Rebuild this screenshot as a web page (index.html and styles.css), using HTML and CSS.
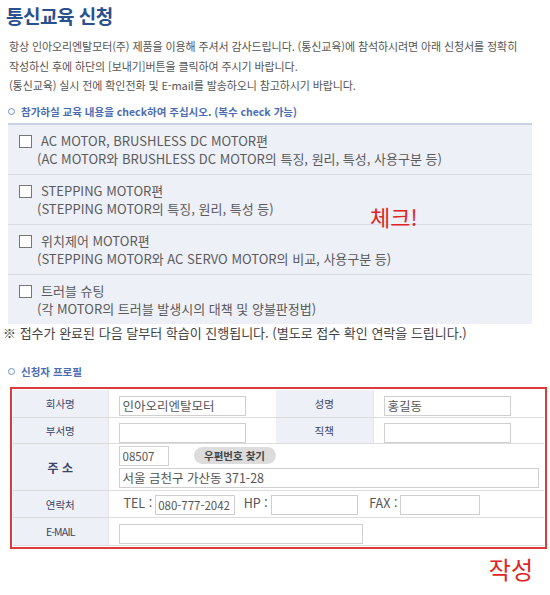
FILE: index.html
```html
<!doctype html>
<html lang="ko">
<head>
  <meta charset="UTF-8">
  <title>통신교육 신청</title>
  <link rel="stylesheet" href="styles.css">
</head>
<body>
<div class="page">
  <h1 class="title">통신교육 신청</h1>
  <p class="intro">
    항상 인아오리엔탈모터(주) 제품을 이용해 주셔서 감사드립니다. (통신교육)에 참석하시려면 아래 신청서를 정확히<br>
    작성하신 후에 하단의 [보내기]버튼을 클릭하여 주시기 바랍니다.<br>
    (통신교육) 실시 전에 확인전화 및 E-mail를 발송하오니 참고하시기 바랍니다.
  </p>

  <h2 class="sect">참가하실 교육 내용을 check하여 주십시오. (복수 check 가능)</h2>
  <div class="courses">
    <label class="course">
      <input type="checkbox" class="box">
      <span class="course-text">AC MOTOR, BRUSHLESS DC MOTOR편<br>(AC MOTOR와 BRUSHLESS DC MOTOR의 특징, 원리, 특성, 사용구분 등)</span>
    </label>
    <label class="course">
      <input type="checkbox" class="box">
      <span class="course-text">STEPPING MOTOR편<br>(STEPPING MOTOR의 특징, 원리, 특성 등)</span>
    </label>
    <label class="course">
      <input type="checkbox" class="box">
      <span class="course-text">위치제어 MOTOR편<br>(STEPPING MOTOR와 AC SERVO MOTOR의 비교, 사용구분 등)</span>
    </label>
    <label class="course">
      <input type="checkbox" class="box">
      <span class="course-text">트러블 슈팅<br>(각 MOTOR의 트러블 발생시의 대책 및 양불판정법)</span>
    </label>
    <span class="mark mark-check">체크!</span>
  </div>
  <p class="notice">※ 접수가 완료된 다음 달부터 학습이 진행됩니다. (별도로 접수 확인 연락을 드립니다.)</p>

  <h2 class="sect sect-profile">신청자 프로필</h2>
  <div class="profile">
    <table>
      <colgroup>
        <col class="c-label"><col class="c-value"><col class="c-label2"><col>
      </colgroup>
      <tr class="r-1">
        <th>회사명</th>
        <td><input type="text" class="field w-127" value="인아오리엔탈모터"></td>
        <th>성명</th>
        <td><input type="text" class="field w-127" value="홍길동"></td>
      </tr>
      <tr>
        <th>부서명</th>
        <td><input type="text" class="field w-127"></td>
        <th>직책</th>
        <td><input type="text" class="field w-127"></td>
      </tr>
      <tr class="r-addr">
        <th class="big">주 소</th>
        <td colspan="3">
          <div class="zip-row">
            <input type="text" class="field zip" value="08507">
            <button type="button" class="zip-btn">우편번호 찾기</button>
          </div>
          <input type="text" class="field addr" value="서울 금천구 가산동 371-28">
        </td>
      </tr>
      <tr class="r-contact">
        <th>연락처</th>
        <td colspan="3" class="contact">
          <span class="lbl">TEL :</span><input type="text" class="field tel" value="080-777-2042">
          <span class="lbl">HP :</span><input type="text" class="field hp">
          <span class="lbl lbl-fax">FAX :</span><input type="text" class="field fax">
        </td>
      </tr>
      <tr class="r-mail">
        <th class="latin">E-MAIL</th>
        <td colspan="3"><input type="text" class="field mail"></td>
      </tr>
    </table>
  </div>
  <div class="mark-write">작성</div>
</div>
</body>
</html>
```

FILE: styles.css
```css
html, body { margin: 0; padding: 0; background: #fff; }
* { box-sizing: border-box; font-family: "Noto Sans CJK KR", "Noto Sans", sans-serif; }
.page { width: 550px; }
.title { margin: 3px 0 0 6px; font-size: 19px; line-height: 26px; font-weight: bold; color: #2c4f8e; letter-spacing: -0.5px; }
.intro { margin: 8px 0 0 9px; font-size: 11px; line-height: 19.5px; color: #555; letter-spacing: -0.1px; }
.sect { margin: 9px 0 0 8px; font-size: 10.5px; line-height: 14px; font-weight: bold; color: #4a6db3; display: flex; align-items: center; }
.sect::before { content: ""; width: 5px; height: 5px; border: 1.5px solid #6f8fc9; border-radius: 50%; margin-right: 6px; }
.sect-profile { margin-top: 23px; }
.courses { position: relative; margin: 4px 18px 0 8px; background: #eef0f7; border-top: 2px solid #c9d1e2; }
.course { display: flex; align-items: flex-start; padding: 7px 0 6px 11px; border-bottom: 1px solid #d9dce5; font-size: 13px; line-height: 18px; color: #5a5a5a; }
.course:last-of-type { border-bottom: 0; }
.box { appearance: none; -webkit-appearance: none; width: 13px; height: 13px; margin: 3px 5px 0 0; border: 1px solid #777; background: #fff; flex: none; }
.course-text { text-indent: 4px; }
.mark { position: absolute; color: #e02424; }
.mark-check { top: 76px; left: 362px; font-size: 22px; line-height: 30px; }
.notice { margin: 0 0 0 3px; font-size: 13px; line-height: 18px; color: #444; }
.profile { margin: 8px 3px 0 10px; border: 2px solid #dc3b3b; padding: 1px; }
table { width: 100%; border-collapse: collapse; table-layout: fixed; }
.c-label { width: 95px; }
.c-value { width: 168px; }
.c-label2 { width: 97px; }
th { background: #eef0f7; font-size: 10.5px; font-weight: normal; color: #3a4466; border-bottom: 1px solid #dcdcdc; border-right: 1px solid #e6e6e6; height: 26px; padding: 0; }
th.big { font-size: 12px; font-weight: bold; color: #3a4466; }
th.latin { letter-spacing: -0.8px; }
td { border-bottom: 1px solid #dcdcdc; padding: 0 0 0 10px; height: 26px; }
tr.r-1 th, tr.r-1 td { height: 28px; }
tr.r-contact th, tr.r-contact td { height: 27px; }
tr.r-mail th, tr.r-mail td { height: 28px; }
tr.r-addr td { padding-top: 1px; padding-bottom: 2px; height: 47px; }
.field { height: 20px; border: 1px solid #cfcfcf; padding: 0 3px; font-size: 12.5px; color: #555; vertical-align: middle; background: #fff; display: inline-block; }
.w-127 { width: 127px; }
.zip-row { display: flex; align-items: center; gap: 25px; margin-bottom: 2px; height: 20px; }
.zip { width: 50px; font-size: 11.5px; }
.zip-btn { border: 0; border-radius: 9px; background: #dcdcdc; color: #444; font-size: 10.5px; font-weight: bold; height: 17px; line-height: 17px; width: 82px; padding: 0; }
.addr { width: 420px; display: block; }
.contact { font-size: 12.5px; color: #555; }
.lbl { margin: 0 3px 0 5px; }
.lbl-fax { margin-left: 8px; }
.tel { width: 80px; font-size: 11.5px; padding: 0 2px; }
.hp { width: 87px; }
.fax { width: 80px; }
.mail { width: 244px; }
.mark-write { text-align: right; margin: 4px 17px 0 0; font-size: 24px; line-height: 32px; color: #e02424; }
```
